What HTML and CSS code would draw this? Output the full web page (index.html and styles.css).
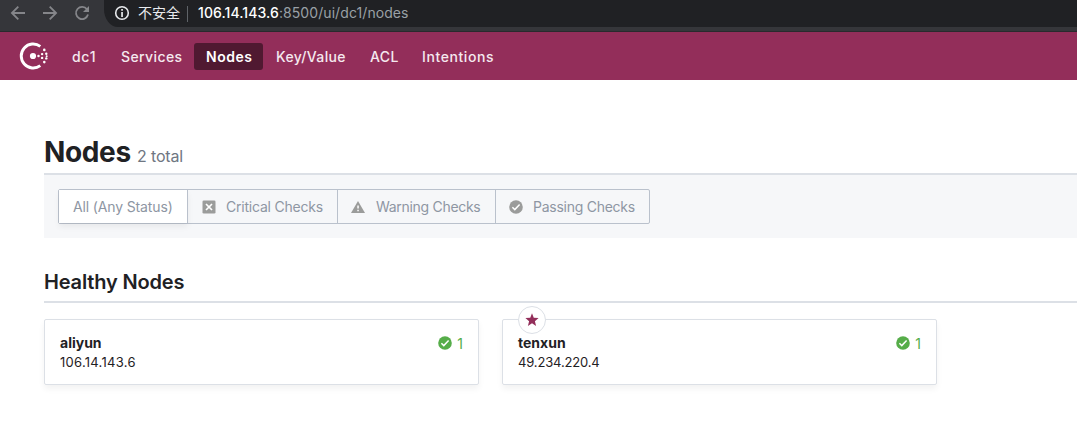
FILE: index.html
```html
<!DOCTYPE html>
<html lang="en">
<head>
<meta charset="utf-8">
<title>Nodes - Consul</title>
<link rel="stylesheet" href="styles.css">
</head>
<body>
<svg class="defs" width="0" height="0" aria-hidden="true">
  <symbol id="check" viewBox="0 0 14 14"><circle cx="7" cy="7" r="6.8" fill="currentColor"/><path d="M3.4 7.3 5.8 9.6 10.6 4.6" fill="none" stroke="#fff" stroke-width="1.5"/></symbol>
</svg>
<div class="browser">
  <svg class="arrows" width="90" height="26" viewBox="0 0 90 26" fill="none" stroke="#85868a" stroke-width="1.8">
    <path d="M25 13H12M18.3 6.6 11.9 13l6.4 6.4M43 13h13M49.7 6.6 56.1 13l-6.4 6.4"/>
    <path d="M87 9.3A6.1 6.1 0 1 0 88 14.6"/><path d="M89 6v6h-6z" fill="#85868a" stroke="none"/>
  </svg>
  <div class="omnibox">
    <svg class="info" width="16" height="16" viewBox="0 0 16 16"><circle cx="8" cy="8" r="6.3" fill="none" stroke="#e8eaed" stroke-width="1.6"/><path d="M7.2 4h1.7v1.7H7.2zM7.2 7h1.7v5H7.2z" fill="#e8eaed"/></svg>
    <span class="insecure">不安全</span>
    <span class="divider"></span>
    <span class="url"><b>106.14.143.6</b>:8500/ui/dc1/nodes</span>
  </div>
</div>
<nav class="nav">
  <svg class="logo" width="30" height="30" viewBox="0 0 30 30">
    <path d="M21.3 5.3A12 12 0 1 0 21.3 24.7" fill="none" stroke="#fff" stroke-width="2.9"/>
    <g fill="#fff"><circle cx="14" cy="15" r="3.1"/><circle cx="19.5" cy="15" r="1.25"/><circle cx="23.1" cy="13.1" r="1.2"/><circle cx="23.1" cy="16.9" r="1.2"/><circle cx="27.3" cy="12.7" r="1.2"/><circle cx="27.7" cy="15.2" r="1"/><circle cx="27.3" cy="17.4" r="1.2"/><circle cx="25.3" cy="8.9" r="1.3"/><circle cx="25.3" cy="21.1" r="1.3"/></g>
  </svg>
  <a class="link dc">dc1</a><a class="link services">Services</a><a class="link active">Nodes</a><a class="link kv">Key/Value</a><a class="link acl">ACL</a><a class="link intentions">Intentions</a>
</nav>
<main class="main">
  <header class="heading"><h1>Nodes</h1><span class="total">2 total</span></header>
  <div class="toolbar">
    <div class="filters">
      <div class="filter all"><span>All (Any Status)</span></div>
      <div class="filter critical"><svg width="14" height="14" viewBox="0 0 14 14"><rect x=".5" y=".5" width="13" height="13" rx="1.3" fill="#9b9c9b"/><path d="m4 4 6 6m0-6-6 6" stroke="#fff" stroke-width="1.7"/></svg><span>Critical Checks</span></div>
      <div class="filter warning"><svg width="14" height="14" viewBox="0 0 14 14"><path d="M7 .9 14 13H0z" fill="#9b9c9b"/><path d="M6.3 5.6h1.5v3H6.3zM6.3 9.8h1.5v1.5H6.3z" fill="#fff"/></svg><span>Warning Checks</span></div>
      <div class="filter passing"><svg width="14" height="14"><use href="#check"/></svg><span>Passing Checks</span></div>
    </div>
  </div>
  <h2>Healthy Nodes</h2>
  <div class="cards">
    <article class="card">
      <div><h3>aliyun</h3><p class="wide">106.14.143.6</p></div>
      <div class="status"><svg width="14" height="14"><use href="#check"/></svg><span>1</span></div>
    </article>
    <article class="card">
      <span class="leader"><svg width="14" height="14" viewBox="0 0 14 14"><path d="m7 .3 1.75 4.4 4.85.35-3.7 3.1 1.2 4.75L7 10.3l-4.1 2.6 1.2-4.75-3.7-3.1 4.85-.35z" fill="#932e5a"/></svg></span>
      <div><h3>tenxun</h3><p>49.234.220.4</p></div>
      <div class="status"><svg width="14" height="14"><use href="#check"/></svg><span>1</span></div>
    </article>
  </div>
</main>
</body>
</html>
```
FILE: styles.css
```css
* { box-sizing: border-box; }
body { margin: 0; height: 441px; overflow: hidden; background: #fff; color: #1f2124; font-family: Inter, "Noto Sans CJK SC", sans-serif; }
.defs { display: block; height: 0; }
h1, h2, h3, p { margin: 0; }
svg { flex: none; }
.browser { height: 32px; display: flex; background: #35363a; border-bottom: 1px solid #292a2d; }
.omnibox { flex: 1; height: 27px; margin-left: 14px; border-radius: 0 0 0 14px / 0 0 0 18px; background: #202124; display: flex; align-items: center; white-space: nowrap; padding-left: 10px; color: #e8eaed; font-size: 14px; }
.info { margin-top: -1px; }
.insecure { margin-left: 8px; width: 43px; height: 22px; font-family: "Noto Sans CJK SC", sans-serif; line-height: 19px; }
.divider { width: 1px; height: 16px; margin: 0 10px 0 6px; background: #5f6368; }
.url { height: 19px; line-height: 17px; letter-spacing: .08px; color: #9aa0a6; }
.url b { color: #fff; font-weight: 500; }
.nav { height: 48px; background: #932e5a; display: flex; align-items: center; padding-left: 19px; }
.logo { margin-right: 11px; }
.link { height: 27px; line-height: 27px; padding: 0 12px; border-radius: 3px; color: #f5e9ef; font-size: 14px; font-weight: 550; letter-spacing: .5px; white-space: nowrap; }
.dc { width: 49px; letter-spacing: .7px; }
.services { width: 85px; letter-spacing: .4px; }
.active { width: 69px; margin-top: 1px; background: #501931; color: #fff; font-weight: 600; }
.kv { width: 95px; padding-left: 13px; letter-spacing: .34px; }
.acl { width: 52px; letter-spacing: .35px; }
.intentions { letter-spacing: .6px; }
.main { padding: 56px 0 0 44px; }
.heading { height: 39px; border-bottom: 2px solid #dce0e6; display: flex; align-items: baseline; }
h1 { font-size: 28px; line-height: 32px; font-weight: 700; width: 93px; letter-spacing: -.35px; }
.total { font-size: 16px; letter-spacing: -.15px; color: #6f7682; }
.toolbar { height: 63px; background: #f6f7f9; padding: 14px; }
.filters { width: 592px; height: 35px; display: flex; border: 1px solid #bac1cc; border-radius: 2px; }
.filter { display: flex; align-items: center; padding-left: 14px; border-right: 1px solid #bac1cc; color: #8e96a3; font-size: 14px; letter-spacing: -.22px; white-space: nowrap; }
.filter svg { margin-right: 10px; color: #9b9c9b; }
.all { width: 129px; background: #fff; box-shadow: 0 4px 6px rgba(0,0,0,.06); letter-spacing: -.14px; }
.critical { width: 150px; }
.warning { width: 158px; padding-left: 13px; letter-spacing: -.3px; }
.warning svg { margin-right: 11px; }
.passing { flex: 1; padding-left: 13px; border-right: 0; letter-spacing: -.26px; }
h2 { height: 65px; padding-top: 32px; border-bottom: 2px solid #dce0e6; font-size: 20px; line-height: 24px; font-weight: 600; letter-spacing: -.17px; }
.cards { display: flex; gap: 23px; padding-top: 16px; }
.card { position: relative; width: 435px; height: 66px; padding: 13px 15px; display: flex; justify-content: space-between; border: 1px solid #dce0e6; border-radius: 2px; box-shadow: 0 4px 6px rgba(0,0,0,.05); }
h3 { font-size: 14px; line-height: 19px; font-weight: 650; }
p { font-size: 13px; line-height: 20px; letter-spacing: -.15px; }
.wide { letter-spacing: .27px; }
.status { display: flex; gap: 5px; align-items: center; height: 19px; color: #56ad49; font-size: 14px; }
.status span { padding-top: 1px; }
.leader { position: absolute; left: 15px; top: -14px; width: 28px; height: 28px; display: grid; place-items: center; border: 1px solid #dce0e6; border-radius: 50%; background: #fff; }
```
